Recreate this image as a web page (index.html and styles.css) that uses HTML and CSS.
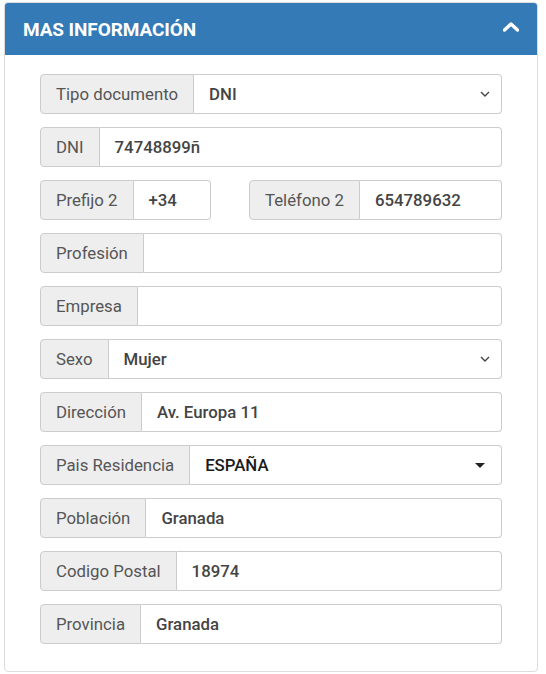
FILE: index.html
```html
<!DOCTYPE html>
<html lang="es">
<head>
<meta charset="utf-8">
<link rel="stylesheet" href="styles.css">
</head>
<body>
<div class="panel">
  <div class="panel-heading">
    <span class="title">MAS INFORMACIÓN</span>
    <svg class="chev" width="16" height="10" viewBox="0 0 16 10"><path d="M1.5 8 L8 2 L14.5 8" fill="none" stroke="#fff" stroke-width="3.4" stroke-linecap="round" stroke-linejoin="round"/></svg>
  </div>
  <div class="panel-body">
    <div class="ig"><span class="addon">Tipo documento</span><span class="ctl sel">DNI<svg class="dn" width="10" height="6" viewBox="0 0 10 6"><path d="M1 1 L5 5 L9 1" fill="none" stroke="#444" stroke-width="1.4"/></svg></span></div>
    <div class="ig"><span class="addon">DNI</span><span class="ctl">74748899ñ</span></div>
    <div class="row2">
      <div class="ig"><span class="addon">Prefijo 2</span><span class="ctl">+34</span></div>
      <div class="ig"><span class="addon">Teléfono 2</span><span class="ctl">654789632</span></div>
    </div>
    <div class="ig"><span class="addon">Profesión</span><span class="ctl"></span></div>
    <div class="ig"><span class="addon">Empresa</span><span class="ctl"></span></div>
    <div class="ig"><span class="addon">Sexo</span><span class="ctl sel">Mujer<svg class="dn" width="10" height="6" viewBox="0 0 10 6"><path d="M1 1 L5 5 L9 1" fill="none" stroke="#444" stroke-width="1.4"/></svg></span></div>
    <div class="ig"><span class="addon">Dirección</span><span class="ctl">Av. Europa 11</span></div>
    <div class="ig"><span class="addon">Pais Residencia</span><span class="ctl sel dark">ESPAÑA<svg class="caret" width="10" height="5" viewBox="0 0 10 5"><path d="M0 0 L10 0 L5 5 Z" fill="#222"/></svg></span></div>
    <div class="ig"><span class="addon">Población</span><span class="ctl">Granada</span></div>
    <div class="ig"><span class="addon">Codigo Postal</span><span class="ctl">18974</span></div>
    <div class="ig"><span class="addon">Provincia</span><span class="ctl">Granada</span></div>
  </div>
</div>
</body>
</html>
```
FILE: styles.css
```css
* { box-sizing: border-box; }
body {
  margin: 0;
  padding: 2px 8px 3px 4px;
  font-family: Roboto, "Liberation Sans", sans-serif;
  background: #fff;
}
.panel {
  width: 534px;
  border: 1px solid #dcdcdc;
  border-radius: 4px;
  overflow: hidden;
}
.panel-heading {
  background: #337ab7;
  height: 52px;
  display: flex;
  align-items: center;
  justify-content: space-between;
  padding: 0 18px 0 18px;
  color: #fff;
}
.title {
  font-weight: 700;
  font-size: 19px;
  letter-spacing: -0.1px;
}
.chev { margin-top: -4px; }
.panel-body {
  padding: 19px 35px 27px 35px;
  display: flex;
  flex-direction: column;
  gap: 13px;
}
.row2 {
  display: grid;
  grid-template-columns: 171px 1fr;
  column-gap: 38px;
}
.ig {
  display: flex;
  height: 40px;
  font-size: 16.8px;
}
.addon {
  background: #eee;
  border: 1px solid #ccc;
  border-radius: 4px 0 0 4px;
  color: #555;
  padding: 0 15px;
  display: flex;
  align-items: center;
  white-space: nowrap;
}
.ctl {
  flex: 1;
  border: 1px solid #ccc;
  border-left: 0;
  border-radius: 0 4px 4px 0;
  display: flex;
  align-items: center;
  padding: 0 15px;
  color: #444;
  font-weight: 500;
  background: #fff;
}
.sel { justify-content: space-between; padding-right: 11px; }
.dark { color: #1a1a1a; padding-right: 16px; }
```
